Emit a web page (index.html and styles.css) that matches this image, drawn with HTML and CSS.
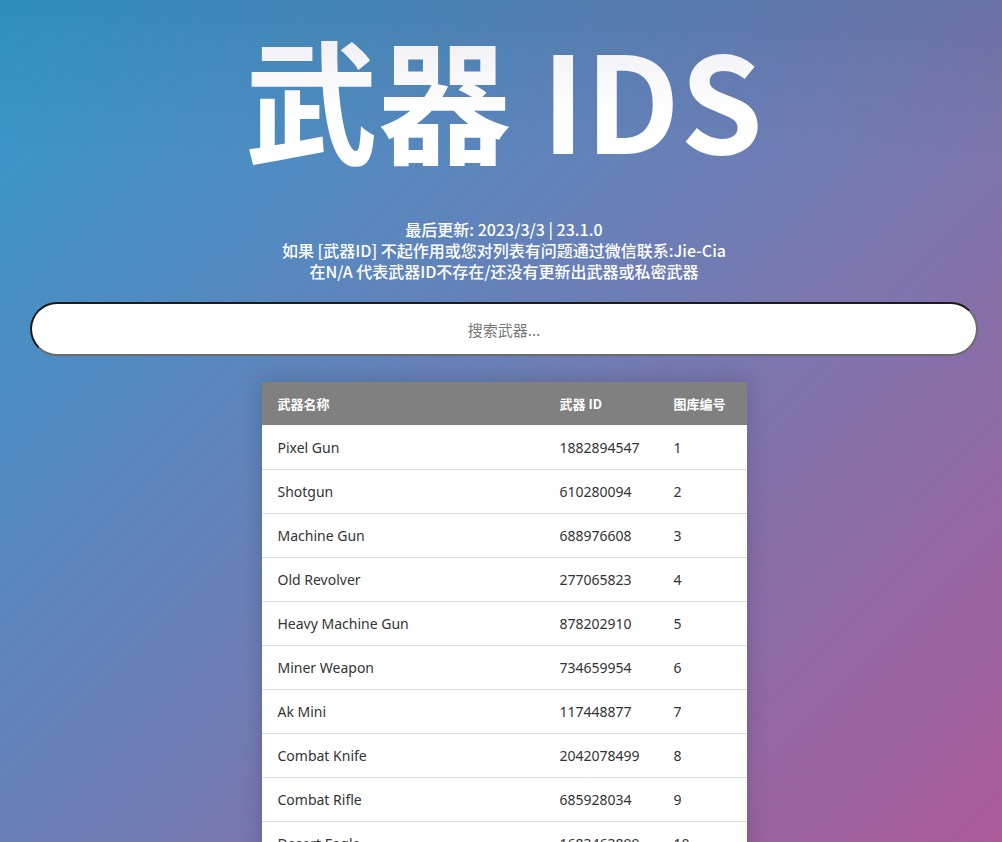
FILE: index.html
```html
<!DOCTYPE html>
<html lang="zh-CN">
<head>
<meta charset="utf-8">
<title>武器 IDS</title>
<link rel="stylesheet" href="styles.css">
</head>
<body>
<div class="page">
  <h1 class="title">武器 IDS</h1>
  <div class="info">
    <p>最后更新: 2023/3/3 | 23.1.0</p>
    <p>如果 [武器ID] 不起作用或您对列表有问题通过微信联系:Jie-Cia</p>
    <p>在N/A 代表武器ID不存在/还没有更新出武器或私密武器</p>
  </div>
  <input class="search" type="text" placeholder="搜索武器...">
  <table class="weapons">
    <thead>
      <tr><th class="c-name">武器名称</th><th class="c-id">武器 ID</th><th class="c-no">图库编号</th></tr>
    </thead>
    <tbody>
      <tr><td>Pixel Gun</td><td>1882894547</td><td>1</td></tr>
      <tr><td>Shotgun</td><td>610280094</td><td>2</td></tr>
      <tr><td>Machine Gun</td><td>688976608</td><td>3</td></tr>
      <tr><td>Old Revolver</td><td>277065823</td><td>4</td></tr>
      <tr><td>Heavy Machine Gun</td><td>878202910</td><td>5</td></tr>
      <tr><td>Miner Weapon</td><td>734659954</td><td>6</td></tr>
      <tr><td>Ak Mini</td><td>117448877</td><td>7</td></tr>
      <tr><td>Combat Knife</td><td>2042078499</td><td>8</td></tr>
      <tr><td>Combat Rifle</td><td>685928034</td><td>9</td></tr>
      <tr><td>Desert Eagle</td><td>1683463899</td><td>10</td></tr>
    </tbody>
  </table>
</div>
</body>
</html>
```

FILE: styles.css
```css
html, body {
  margin: 0;
  padding: 0;
}
body {
  font-family: "Noto Sans", "Noto Sans CJK SC", sans-serif;
  background:
    linear-gradient(to bottom, rgba(0,0,0,0.07), rgba(0,0,0,0) 160px),
    linear-gradient(135deg, #3399cc 0%, #6e7db5 50%, #ab5a98 100%);
  background-attachment: fixed;
  min-height: 100vh;
}
.page {
  padding: 0 24px 40px 30px;
  display: flex;
  flex-direction: column;
  align-items: center;
}
.title {
  margin: 16px 0 0;
  font-family: "Noto Sans CJK SC", sans-serif;
  font-weight: 700;
  font-size: 133px;
  line-height: 160px;
  letter-spacing: 0;
  background: linear-gradient(to bottom, #ececf2 0%, #ffffff 60%);
  -webkit-background-clip: text;
  background-clip: text;
  color: transparent;
}
.info {
  margin-top: 43px;
  text-align: center;
  color: #fff;
  font-family: "Noto Sans CJK SC", sans-serif;
  font-weight: 500;
  font-size: 16px;
  line-height: 21px;
}
.info p {
  margin: 0;
}
.search {
  box-sizing: border-box;
  margin-top: 20px;
  width: 100%;
  height: 54px;
  border-radius: 27px;
  border: 2px solid;
  border-color: #1c1c1c #6a6a6a #6a6a6a #1c1c1c;
  background: #fff;
  text-align: center;
  font-family: "Noto Sans CJK SC", sans-serif;
  font-size: 15px;
  color: #333;
  outline: none;
}
.search::placeholder {
  color: #777;
}
.weapons {
  margin-top: 26px;
  width: 485px;
  border-collapse: collapse;
  background: #fff;
  box-shadow: 0 0 20px rgba(0,0,0,0.18);
  font-size: 14px;
}
.weapons th {
  background: #808080;
  color: #fff;
  font-family: "Noto Sans CJK SC", sans-serif;
  font-weight: 700;
  font-size: 13px;
  text-align: left;
  height: 43px;
  padding: 0 16px;
}
.weapons .c-name { width: 250px; }
.weapons .c-id { width: 82px; }
.weapons td {
  height: 43px;
  padding: 0 16px;
  color: #333;
  border-bottom: 1px solid #dddddd;
}
.weapons tbody tr:first-child td {
  height: 44px;
}
```
